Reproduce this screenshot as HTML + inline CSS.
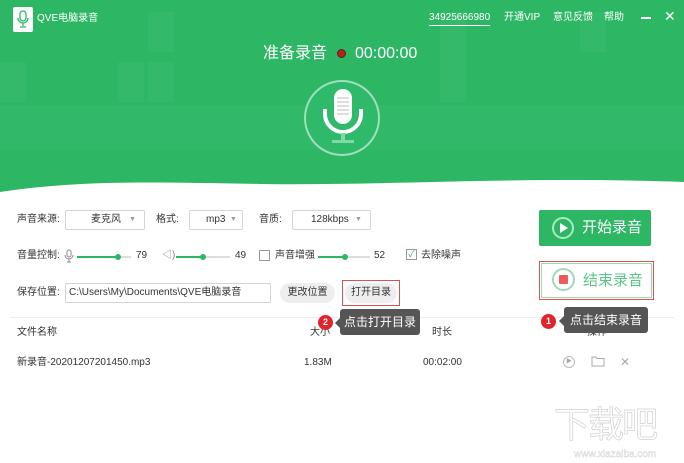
<!DOCTYPE html>
<html><head><meta charset="utf-8"><style>
*{margin:0;padding:0;box-sizing:border-box}
body{width:684px;height:463px;overflow:hidden;background:#fff;font-family:"Liberation Sans","Noto Sans CJK SC",sans-serif;font-size:10px;line-height:14px;color:#333;position:relative}
.a{position:absolute;white-space:nowrap}
.hdr{position:absolute;left:0;top:0;width:684px;height:195px;background:#2db765}
.sq{position:absolute;background:rgba(255,255,255,0.035)}
.box{position:absolute;border:1px solid #d4d4d4;border-radius:2px;height:20px;line-height:18px;background:#fff}
.sl{position:absolute;height:2px;background:#ddd}
.sl i{position:absolute;left:0;top:0;height:2px;background:#2db765}
.sl b{position:absolute;top:-2px;width:6px;height:6px;border-radius:3px;background:#2db765}
.btn{position:absolute;background:#eeeeee;border-radius:10px;height:20px;line-height:20px;text-align:center}
.tip{position:absolute;background:#555;color:#fff;font-size:12px;border-radius:3px;text-align:center}
.dot{position:absolute;width:15px;height:15px;border-radius:8px;background:#e0242c;color:#fff;font-size:9px;text-align:center;line-height:15px;font-weight:bold}
</style></head><body>
<div class="hdr">
<div class="sq" style="left:148px;top:12px;width:26px;height:40px"></div>
<div class="sq" style="left:0;top:62px;width:26px;height:40px"></div>
<div class="sq" style="left:118px;top:62px;width:26px;height:40px"></div>
<div class="sq" style="left:148px;top:62px;width:26px;height:40px"></div>
<div class="sq" style="left:440px;top:12px;width:26px;height:90px"></div>
<div class="sq" style="left:0;top:105px;width:684px;height:45px;background:rgba(255,255,255,0.025)"></div>
<div class="sq" style="left:580px;top:12px;width:26px;height:40px"></div>
</div>
<svg class="a" style="left:0;top:170px" width="684" height="30"><path d="M0 22 C80 10 150 12 260 14 C380 16 520 6 684 12 L684 30 L0 30Z" fill="#fff"/></svg>
<div class="a" style="left:13px;top:7px;width:20px;height:25px;background:#fff;border-radius:2px"></div>
<svg class="a" style="left:15px;top:10px" width="16" height="20"><rect x="5" y="1" width="6" height="10" rx="3" fill="none" stroke="#2db765" stroke-width="1.3"/><path d="M3 8 a5 5 0 0 0 10 0 M8 13 v3 M5 17 h6" fill="none" stroke="#2db765" stroke-width="1.3"/></svg>
<div class="a" style="left:37px;top:12px;color:#fff;font-size:10px">QVE电脑录音</div>
<div class="a" style="left:429px;top:11px;color:#fff;font-size:10px;border-bottom:1px solid #fff;line-height:14px">34925666980</div>
<div class="a" style="left:504px;top:11px;color:#fff;font-size:10px">开通VIP</div>
<div class="a" style="left:553px;top:11px;color:#fff;font-size:10px">意见反馈</div>
<div class="a" style="left:604px;top:11px;color:#fff;font-size:10px">帮助</div>
<div class="a" style="left:641px;top:17px;width:10px;height:2px;background:#fff"></div>
<div class="a" style="left:664px;top:9px;color:#fff;font-size:14px">✕</div>
<div class="a" style="left:263px;top:44px;color:#fff;font-size:16px;line-height:20px">准备录音</div>
<div class="a" style="left:337px;top:49px;width:9px;height:9px;border-radius:5px;background:#c81a10;border:1px solid #333"></div>
<div class="a" style="left:355px;top:44px;color:#fff;font-size:16px;line-height:20px">00:00:00</div>
<div class="a" style="left:304px;top:80px;width:76px;height:76px;border-radius:50%;border:2px solid rgba(255,255,255,0.55);background:#2fb96a"></div>
<svg class="a" style="left:318px;top:86px" width="50" height="60"><rect x="16" y="3" width="18" height="35" rx="9" fill="#fff"/><path d="M19 12h12M19 16h12M19 20h12M19 24h12M19 28h12" stroke="#bbb" stroke-width="1"/><path d="M7 23 v5 a18 18 0 0 0 36 0 v-5" fill="none" stroke="#fff" stroke-width="4"/><rect x="23" y="47" width="4" height="7" fill="#7ddba4"/><rect x="14" y="54" width="22" height="3" fill="#7ddba4"/></svg>

<div class="a" style="left:17px;top:213px">声音来源:</div>
<div class="box" style="left:65px;top:210px;width:80px"><span style="position:absolute;left:25px">麦克风</span><span style="position:absolute;left:63px;color:#999;font-size:7px">▼</span></div>
<div class="a" style="left:156px;top:213px">格式:</div>
<div class="box" style="left:189px;top:210px;width:54px"><span style="position:absolute;left:16px">mp3</span><span style="position:absolute;left:40px;color:#999;font-size:7px">▼</span></div>
<div class="a" style="left:259px;top:213px">音质:</div>
<div class="box" style="left:292px;top:210px;width:79px"><span style="position:absolute;left:18px">128kbps</span><span style="position:absolute;left:62px;color:#999;font-size:7px">▼</span></div>

<div class="a" style="left:17px;top:249px">音量控制:</div>
<svg class="a" style="left:64px;top:249px" width="10" height="15"><rect x="3" y="1" width="4" height="7" rx="2" fill="none" stroke="#888"/><path d="M1 6a4 4 0 0 0 8 0M5 10v3M3 13h4" fill="none" stroke="#888"/></svg>
<div class="sl" style="left:77px;top:256px;width:54px"><i style="width:40px"></i><b style="left:38px"></b></div>
<div class="a" style="left:136px;top:249px">79</div>
<div class="a" style="left:162px;top:249px;color:#888;font-size:10px">◁)</div>
<div class="sl" style="left:176px;top:256px;width:54px"><i style="width:26px"></i><b style="left:24px"></b></div>
<div class="a" style="left:235px;top:249px">49</div>
<div class="a" style="left:259px;top:250px;width:11px;height:11px;border:1px solid #999"></div>
<div class="a" style="left:275px;top:249px">声音增强</div>
<div class="sl" style="left:318px;top:256px;width:52px"><i style="width:26px"></i><b style="left:24px"></b></div>
<div class="a" style="left:374px;top:249px">52</div>
<div class="a" style="left:406px;top:249px;width:11px;height:11px;border:1px solid #999;font-size:9px;line-height:9px;text-align:center;color:#2db765">✓</div>
<div class="a" style="left:421px;top:249px">去除噪声</div>

<div class="a" style="left:17px;top:286px">保存位置:</div>
<div class="box" style="left:65px;top:283px;width:206px;padding-left:3px">C:\Users\My\Documents\QVE电脑录音</div>
<div class="btn" style="left:280px;top:283px;width:55px">更改位置</div>
<div class="btn" style="left:345px;top:283px;width:52px">打开目录</div>
<div class="a" style="left:342px;top:280px;width:58px;height:26px;border:1px solid #d9534f"></div>

<div class="a" style="left:539px;top:210px;width:112px;height:36px;background:#2db765;border-radius:2px"></div>
<div class="a" style="left:552px;top:217px;width:22px;height:22px;border-radius:50%;border:2px solid #a7eac0"></div>
<svg class="a" style="left:559px;top:222px" width="10" height="12"><path d="M1 1L9 6L1 11Z" fill="#fff"/></svg>
<div class="a" style="left:582px;top:218px;color:#fff;font-size:15px;line-height:20px">开始录音</div>
<div class="a" style="left:539px;top:261px;width:115px;height:39px;border:1px solid #d9534f"></div>
<div class="a" style="left:541px;top:263px;width:111px;height:35px;border:1px solid #9fd9b5"></div>
<div class="a" style="left:552px;top:268px;width:23px;height:23px;border-radius:50%;border:2px solid #9fd9b5"></div>
<div class="a" style="left:559px;top:275px;width:9px;height:9px;background:#ef5a5a;border-radius:1px"></div>
<div class="a" style="left:583px;top:271px;color:#5cc488;font-size:15px;line-height:20px">结束录音</div>

<div class="a" style="left:10px;top:317px;width:664px;height:1px;background:#eee"></div>
<div class="a" style="left:17px;top:326px">文件名称</div>
<div class="a" style="left:310px;top:326px">大小</div>
<div class="a" style="left:432px;top:326px">时长</div>
<div class="a" style="left:587px;top:326px">操作</div>
<div class="a" style="left:17px;top:356px">新录音-20201207201450.mp3</div>
<div class="a" style="left:304px;top:356px">1.83M</div>
<div class="a" style="left:423px;top:356px">00:02:00</div>
<div class="a" style="left:563px;top:356px;width:12px;height:12px;border-radius:50%;border:1px solid #bbb;font-size:6px;color:#aaa;text-align:center;line-height:10px">▶</div>
<svg class="a" style="left:591px;top:355px" width="14" height="12"><path d="M1 2h4l1 1.5h7v7.5H1Z" fill="none" stroke="#aaa"/></svg>
<div class="a" style="left:620px;top:355px;color:#aaa;font-size:12px">✕</div>

<div class="dot" style="left:318px;top:315px">2</div>
<div class="a" style="left:335px;top:318px;width:0;height:0;border:5px solid transparent;border-right-color:#555;border-left:0"></div>
<div class="tip" style="left:340px;top:309px;width:80px;height:26px;line-height:26px">点击打开目录</div>
<div class="dot" style="left:541px;top:314px">1</div>
<div class="a" style="left:559px;top:316px;width:0;height:0;border:5px solid transparent;border-right-color:#555;border-left:0"></div>
<div class="tip" style="left:564px;top:307px;width:84px;height:26px;line-height:26px">点击结束录音</div>

<div class="a" style="left:554px;top:405px;color:#fff;font-size:36px;line-height:40px;-webkit-text-stroke:0.7px #d0d0d0;letter-spacing:-2px">下载吧</div>
<div class="a" style="left:574px;top:448px;color:#fff;font-size:10px;-webkit-text-stroke:0.4px #d0d0d0">www.xiazaiba.com</div>
</body></html>
